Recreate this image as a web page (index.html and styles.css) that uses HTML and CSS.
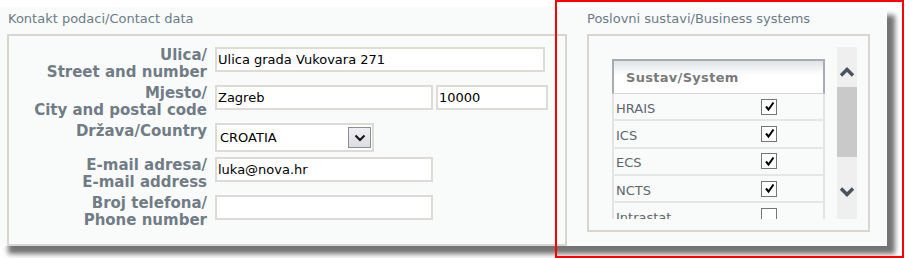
FILE: index.html
```html
<!DOCTYPE html>
<html>

<head>
    <link rel="stylesheet" href="styles.css">
</head>

<body>
    <div class="page">
        <div class="panel">
            <!-- Contact data -->
            <section class="card contact">
                <div class="card-title">Kontakt podaci/Contact data</div>
                <div class="box form">
                    <div class="row">
                        <label>Ulica/<br>Street and number</label>
                        <div class="fields"><input type="text" class="w-long" value="Ulica grada Vukovara 271"></div>
                    </div>
                    <div class="row">
                        <label>Mjesto/<br>City and postal code</label>
                        <div class="fields">
                            <input type="text" class="w-mid" value="Zagreb">
                            <input type="text" class="w-zip" value="10000">
                        </div>
                    </div>
                    <div class="row">
                        <label>Država/Country</label>
                        <div class="fields">
                            <div class="select">
                                <span class="select-value">CROATIA</span>
                                <span class="select-btn">
                                    <svg width="12" height="8" viewBox="0 0 12 8">
                                        <polyline points="1.5,1.5 6,6 10.5,1.5" fill="none" stroke="#111" stroke-width="2"/>
                                    </svg>
                                </span>
                            </div>
                        </div>
                    </div>
                    <div class="row">
                        <label>E-mail adresa/<br>E-mail address</label>
                        <div class="fields"><input type="text" class="w-mid" value="luka@nova.hr"></div>
                    </div>
                    <div class="row">
                        <label>Broj telefona/<br>Phone number</label>
                        <div class="fields"><input type="text" class="w-mid" value=""></div>
                    </div>
                </div>
            </section>

            <!-- Business systems -->
            <section class="card systems">
                <div class="card-title">Poslovni sustavi/Business systems</div>
                <div class="box">
                    <div class="list">
                        <div class="list-view">
                            <div class="grid">
                                <div class="grid-head">Sustav/System</div>
                                <div class="grid-row"><span>HRAIS</span><span class="cb"><svg width="13" height="13" viewBox="0 0 13 13"><polyline points="3,6.5 5.5,9.5 10.5,2.5" fill="none" stroke="#000" stroke-width="2"/></svg></span></div>
                                <div class="grid-row"><span>ICS</span><span class="cb"><svg width="13" height="13" viewBox="0 0 13 13"><polyline points="3,6.5 5.5,9.5 10.5,2.5" fill="none" stroke="#000" stroke-width="2"/></svg></span></div>
                                <div class="grid-row"><span>ECS</span><span class="cb"><svg width="13" height="13" viewBox="0 0 13 13"><polyline points="3,6.5 5.5,9.5 10.5,2.5" fill="none" stroke="#000" stroke-width="2"/></svg></span></div>
                                <div class="grid-row"><span>NCTS</span><span class="cb"><svg width="13" height="13" viewBox="0 0 13 13"><polyline points="3,6.5 5.5,9.5 10.5,2.5" fill="none" stroke="#000" stroke-width="2"/></svg></span></div>
                                <div class="grid-row"><span>Intrastat</span><span class="cb"></span></div>
                            </div>
                        </div>
                        <div class="scrollbar">
                            <div class="sb-up">
                                <svg width="16" height="10" viewBox="0 0 16 10"><polyline points="2,8.5 8,2.5 14,8.5" fill="none" stroke="#4b5361" stroke-width="3.5"/></svg>
                            </div>
                            <div class="sb-thumb"></div>
                            <div class="sb-down">
                                <svg width="16" height="10" viewBox="0 0 16 10"><polyline points="2,1.5 8,7.5 14,1.5" fill="none" stroke="#4b5361" stroke-width="3.5"/></svg>
                            </div>
                        </div>
                    </div>
                </div>
            </section>
        </div>

        <!-- red highlight frame -->
        <div class="highlight"></div>
    </div>
</body>

</html>
```

FILE: styles.css
```css
body {
    font-family: "DejaVu Sans", Verdana, sans-serif;
    background-color: #fff;
    margin: 0;
    padding: 0;
}

.page {
    position: relative;
    width: 917px;
    height: 258px;
    padding-top: 7px;
    box-sizing: border-box;
}

.panel {
    display: flex;
    width: 887px;
    height: 239px;
    background-color: #f9fbfa;
    box-shadow: 8px 8px 5px rgba(0, 0, 0, 0.55);
}

.card {
    display: flex;
    flex-direction: column;
}

.card-title {
    height: 27px;
    box-sizing: border-box;
    padding-top: 4px;
    font-size: 13px;
    line-height: 16px;
    color: #6b7b89;
}

.box {
    border: 2px solid #d9d6cf;
    box-sizing: border-box;
}

/* left card */
.contact {
    width: 567px;
}

.contact .card-title {
    padding-left: 8px;
}

.contact .box {
    margin-left: 7px;
    width: 560px;
    height: 212px;
    padding: 11px 0 0 0;
}

.row {
    display: flex;
    align-items: flex-start;
    margin-bottom: 5px;
}

.row label {
    width: 198px;
    text-align: right;
    font-size: 15px;
    font-weight: bold;
    line-height: 16.5px;
    color: #707c86;
}

.fields {
    display: flex;
    gap: 3px;
    margin-left: 8px;
}

.fields input {
    height: 25px;
    box-sizing: border-box;
    border: 2px solid #dedbd5;
    background-color: #fff;
    padding: 0 1px;
    margin: 0;
    font-family: "DejaVu Sans", Verdana, sans-serif;
    font-size: 13px;
    color: #000;
    outline: none;
}

.w-long {
    width: 330px;
}

.w-mid {
    width: 218px;
}

.w-zip {
    width: 112px;
}

.select {
    display: flex;
    align-items: center;
    width: 159px;
    height: 29px;
    box-sizing: border-box;
    border: 2px solid #dedbd5;
    background-color: #fff;
}

.select-value {
    flex: 1;
    padding-left: 3px;
    font-size: 13px;
    color: #000;
}

.select-btn {
    display: flex;
    align-items: center;
    justify-content: center;
    width: 23px;
    height: 21px;
    box-sizing: border-box;
    margin-right: 1px;
    border: 1px solid #8c8c94;
    background: linear-gradient(#f0f0f4, #dcdce2);
}

/* right card */
.systems {
    width: 320px;
}

.systems .card-title {
    padding-left: 20px;
}

.systems .box {
    margin-left: 20px;
    width: 283px;
    height: 198px;
    padding: 11px;
}

.list {
    display: flex;
    height: 172px;
}

.list-view {
    flex: 1;
    overflow: hidden;
    padding: 12px 12px 0 12px;
}

.grid {
    width: 213px;
}

.grid-head {
    height: 35px;
    box-sizing: border-box;
    border: 2px solid #a6acb2;
    border-bottom: 1px solid #d4d6d8;
    background: linear-gradient(#dfe4e8, #fff 45%);
    padding: 9px 0 0 12px;
    font-size: 13px;
    font-weight: bold;
    letter-spacing: 0.3px;
    color: #7a7a7a;
}

.grid-row {
    display: flex;
    align-items: center;
    height: 27.3px;
    box-sizing: border-box;
    border-left: 2px solid #e3e3e3;
    border-right: 2px solid #e3e3e3;
    border-bottom: 2px solid #e6e6e6;
    padding: 3px 0 0 2px;
    font-size: 13px;
    color: #5d6670;
}

.grid-row span:first-child {
    flex: 1;
}

.cb {
    display: flex;
    align-items: center;
    justify-content: center;
    width: 16px;
    height: 16px;
    box-sizing: border-box;
    margin: -3px 46px 0 0;
    border: 1px solid #767676;
    background-color: #fff;
}

.scrollbar {
    display: flex;
    flex-direction: column;
    width: 20px;
    background-color: #efefef;
}

.sb-up {
    height: 40px;
    display: flex;
    justify-content: center;
    padding-top: 20px;
    box-sizing: border-box;
}

.sb-thumb {
    height: 70px;
    background-color: #c9c9c9;
}

.sb-down {
    flex: 1;
    display: flex;
    justify-content: center;
    padding-top: 30px;
}

.highlight {
    position: absolute;
    left: 555px;
    top: 0;
    width: 349px;
    height: 258px;
    box-sizing: border-box;
    border: 2px solid #f00;
}
```
